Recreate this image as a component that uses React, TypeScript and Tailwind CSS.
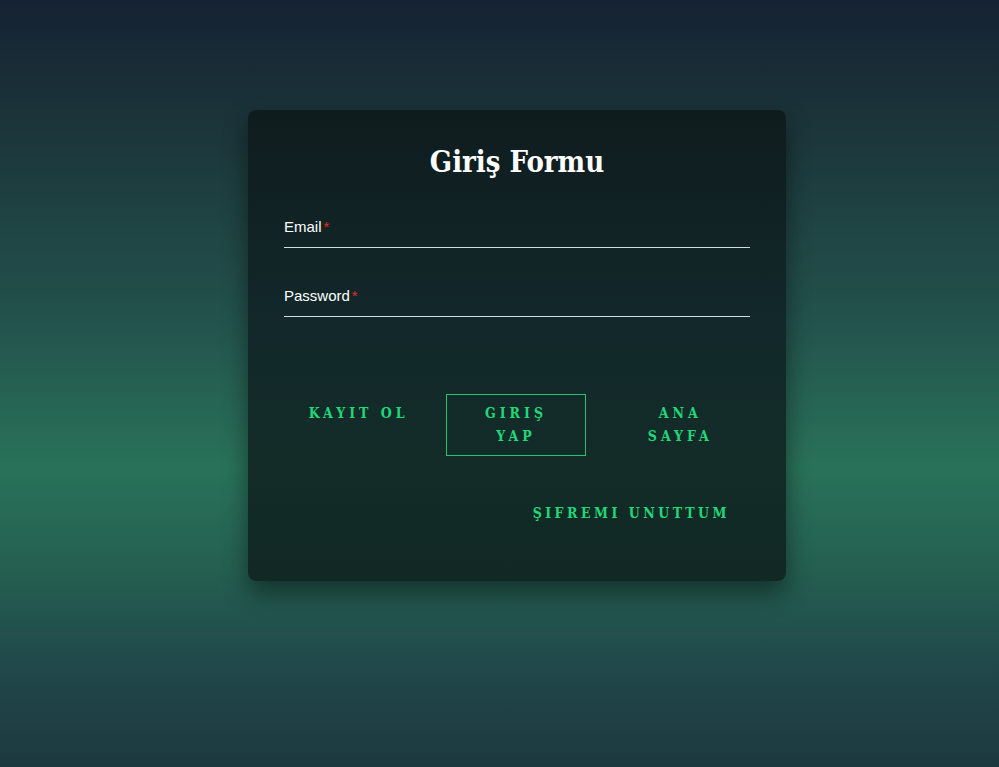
export default function App() {
  return (
    <div className="flex min-h-[767px] w-full justify-center bg-[linear-gradient(180deg,#152233_0%,#1b3339_15%,#22504b_40%,#297259_61%,#245e50_75%,#20464a_88%,#1d3940_100%)] pl-[35px] pt-[110px] font-['Liberation_Sans',Arial,sans-serif]">
      <div className="h-[471px] w-[538px] rounded-lg bg-[linear-gradient(180deg,#0f1c1e_0%,#12282a_45%,#132c28_75%,#112823_100%)] px-9 pt-[34px] shadow-[0_12px_24px_rgba(0,0,0,0.45)]">
        {/* Title */}
        <h1 className="text-center font-['DejaVu_Serif',serif] text-[29px] font-bold leading-9 font-stretch-condensed text-white">
          Giriş Formu
        </h1>

        {/* Fields */}
        <div className="mt-[38px] flex flex-col gap-[39px]">
          <label className="block border-b border-[#d3ded8] pb-[12px] text-[15px] leading-[17px] text-white">
            Email<span className="ml-0.5 text-[#e02d2d]">*</span>
          </label>
          <label className="block border-b border-[#d3ded8] pb-[12px] text-[15px] leading-[17px] text-white">
            Password<span className="ml-0.5 text-[#e02d2d]">*</span>
          </label>
        </div>

        {/* Buttons */}
        <div className="mt-[77px] flex items-start font-['DejaVu_Serif',serif] text-[14px] font-bold leading-[23px] tracking-[4px] font-stretch-condensed text-[#1fd878]">
          <button className="ml-[5px] w-[141px] border border-transparent py-[7px] text-center">
            KAYIT OL
          </button>
          <button className="ml-[18px] w-[141px] border border-[#22c56f] py-[7px] text-center">
            GIRIŞ<br />YAP
          </button>
          <button className="ml-[25px] w-[141px] border border-transparent py-[7px] text-center">
            ANA<br />SAYFA
          </button>
        </div>

        <div className="mt-[46px] flex justify-end pr-5 font-['DejaVu_Serif',serif] text-[14px] font-bold leading-[23px] tracking-[3.5px] font-stretch-condensed text-[#1fd878]">
          <button>ŞIFREMI UNUTTUM</button>
        </div>
      </div>
    </div>
  );
}
